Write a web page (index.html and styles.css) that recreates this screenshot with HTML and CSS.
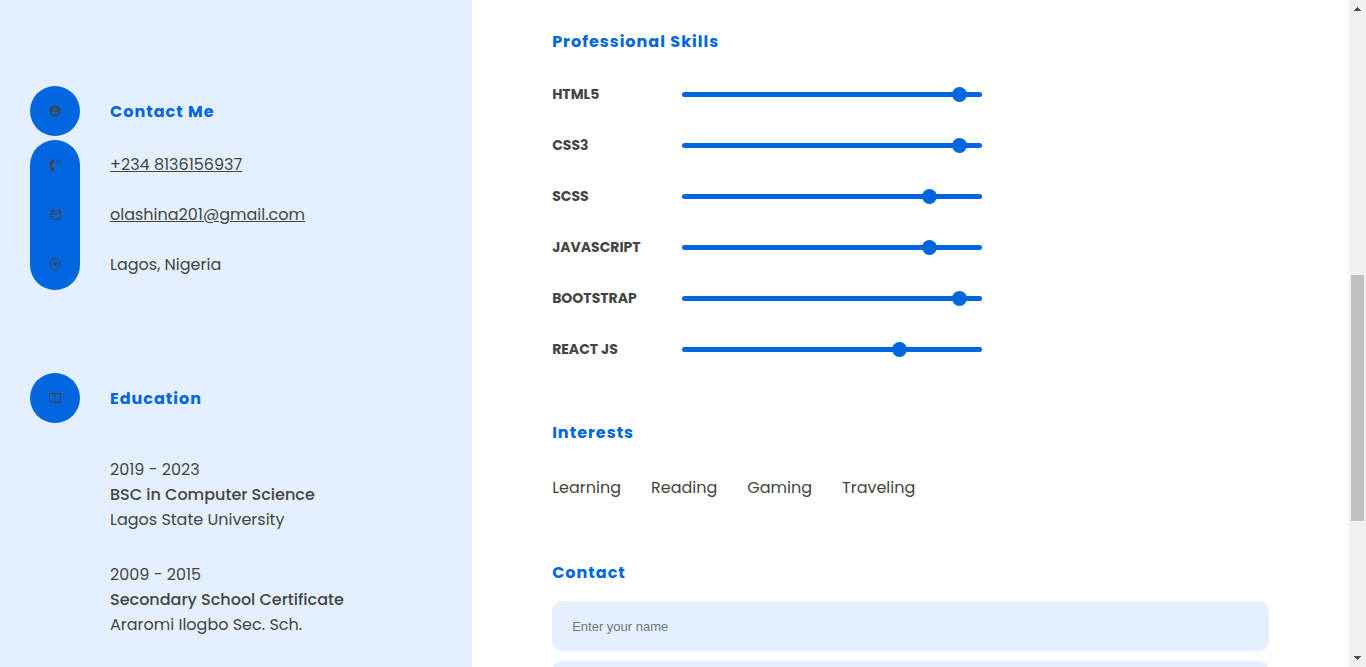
FILE: index.html
```html
<!DOCTYPE html>
<html lang="en">
<head>
<meta charset="utf-8">
<title>Resume</title>
<link rel="stylesheet" href="styles.css">
</head>
<body>
<div class="page">
  <aside class="sidebar">
    <section class="contact-me">
      <div class="side-head">
        <span class="badge"><svg class="icon" viewBox="0 0 24 24"><path fill-rule="evenodd" d="M12 1a11 11 0 1 0 0 22 11 11 0 0 0 0-22zm0 3.500a4 4 0 1 1 0 8 4 4 0 0 1 0-8zM5 15c2-1.500 4-1.500 7-1.500s5 0 7 1.500c-1 3-4 4.800-7 4.800S6 18 5 15z"/></svg></span>
        <h2 class="title">Contact Me</h2>
      </div>
      <div class="contact-body">
        <div class="rail">
          <span class="rail-item"><svg class="icon icon-tall" viewBox="0 0 24 28"><path d="M9 3 4.500 5C0 11 .5 20 5 26.500l5 .5 2-5-3-3-2 .6c-1.300-3-1.300-7 0-10l2.500.4 2-4z"/><path class="line thin" d="M14 6c1.300 2 1.300 4 0 6M17.500 3c2.500 4 2.500 8 0 12M21 3c2.500 4 2.500 8 0 12"/></svg></span>
          <span class="rail-item"><svg class="icon" viewBox="0 0 24 24"><path class="line" d="M5 10V3h18v17h-9M5 4l9 7 9-7M0 11h8M2 15h7M6 20h5"/></svg></span>
          <span class="rail-item"><svg class="icon icon-tall" viewBox="0 0 24 28"><path class="line" d="M12 27C7 21 2 16.500 2 11a10 10 0 0 1 20 0c0 5.500-5 10-10 16z"/><circle cx="12" cy="11" r="4"/></svg></span>
        </div>
        <ul class="contact-list">
          <li><a href="tel:+2348136156937">+234 8136156937</a></li>
          <li><a href="mailto:olashina201@gmail.com">olashina201@gmail.com</a></li>
          <li>Lagos, Nigeria</li>
        </ul>
      </div>
    </section>
    <section class="education">
      <div class="side-head">
        <span class="badge"><svg class="icon" viewBox="0 0 24 24"><path class="line" d="M1 3h22v17h-9L12 22l-2-2H1zM12 3v20"/></svg></span>
        <h2 class="title">Education</h2>
      </div>
      <div class="schools">
        <div class="school"><p>2019 - 2023</p><h3>BSC in Computer Science</h3><p>Lagos State University</p></div>
        <div class="school"><p>2009 - 2015</p><h3>Secondary School Certificate</h3><p>Araromi Ilogbo Sec. Sch.</p></div>
      </div>
    </section>
  </aside>
  <main class="main">
    <section>
      <h2 class="title">Professional Skills</h2>
      <div class="skills">
        <div class="skill"><label for="s1">HTML5</label><input id="s1" type="range" max="285" value="270"></div>
        <div class="skill"><label for="s2">CSS3</label><input id="s2" type="range" max="285" value="270"></div>
        <div class="skill"><label for="s3">SCSS</label><input id="s3" type="range" max="285" value="240"></div>
        <div class="skill"><label for="s4">JAVASCRIPT</label><input id="s4" type="range" max="285" value="240"></div>
        <div class="skill"><label for="s5">BOOTSTRAP</label><input id="s5" type="range" max="285" value="270"></div>
        <div class="skill"><label for="s6">REACT JS</label><input id="s6" type="range" max="285" value="210"></div>
      </div>
    </section>
    <section>
      <h2 class="title">Interests</h2>
      <ul class="interests"><li>Learning</li><li>Reading</li><li>Gaming</li><li>Traveling</li></ul>
    </section>
    <section>
      <h2 class="title">Contact</h2>
      <form class="form">
        <input class="field" type="text" aria-label="Name" placeholder="Enter your name">
        <input class="field" type="email" aria-label="Email">
      </form>
    </section>
  </main>
  <div class="scrollbar" aria-hidden="true">
    <svg class="arrow" viewBox="0 0 17 17"><path d="M8 7h1v1h1v1h1v1h1v1H5v-1h1V9h1V8h1z"/></svg>
    <span class="before"></span><span class="thumb"></span><span class="after"></span>
    <svg class="arrow" viewBox="0 0 17 17"><path d="M5 6h7v1h-1v1h-1v1H9v1H8V9H7V8H6V7H5z"/></svg>
  </div>
</div>
</body>
</html>
```
FILE: styles.css
```css
* { box-sizing: border-box; margin: 0; padding: 0; }
body {
  font-family: Poppins, Inter, "Open Sans", sans-serif;
  font-size: 16px;
  line-height: 25px;
  color: #444;
  background: #fff;
}
ul { list-style: none; }
.page {
  display: grid;
  grid-template-columns: 35fr 65fr 17px;
  grid-template-rows: minmax(0, 1fr);
  height: 100vh;
  overflow: hidden;
}
.title {
  font-size: 16px;
  font-weight: 700;
  letter-spacing: 1px;
  color: #0066df;
}

.sidebar {
  display: flex;
  flex-direction: column;
  gap: 83px;
  padding: 86px 30px 30px;
  background: #e4f0ff;
}
.side-head { display: flex; align-items: center; gap: 30px; }
.badge {
  display: grid;
  place-items: center;
  width: 50px;
  height: 50px;
  border-radius: 50%;
  background: #0066df;
}
.icon { display: block; width: 12px; height: 12px; fill: #444; }
.icon-tall { height: 14px; }
.line { fill: none; stroke: #444; stroke-width: 2; }
.thin { stroke-width: 1; }
.contact-body { display: flex; gap: 30px; margin-top: 4px; }
.rail { width: 50px; border-radius: 25px; background: #0066df; }
.rail-item { display: grid; place-items: center; height: 50px; }
.contact-list { line-height: 50px; }
.contact-list a { color: inherit; text-decoration: underline; }
.schools {
  display: flex;
  flex-direction: column;
  gap: 30px;
  margin: 34px 0 0 80px;
}
.school h3 { font-size: 16px; font-weight: 500; }

.main {
  display: flex;
  flex-direction: column;
  gap: 60px;
  padding: 29px 80px;
}
.skills { display: flex; flex-direction: column; gap: 30px; margin-top: 30px; }
.skill {
  display: grid;
  grid-template-columns: 130px 300px;
  align-items: center;
  line-height: 21px;
}
.skill label { font-size: 14px; font-weight: 700; }
.skill input {
  appearance: none;
  width: 100%;
  height: 5px;
  border-radius: 3px;
  background: #0066df;
}
.skill input::-webkit-slider-thumb {
  appearance: none;
  width: 15px;
  height: 15px;
  border-radius: 50%;
  background: #0066df;
}
.interests { display: flex; gap: 30px; margin-top: 30px; }
.form { display: flex; flex-direction: column; gap: 10px; margin-top: 16px; }
.field {
  width: 100%;
  height: 50px;
  padding: 0 20px;
  border: 0;
  border-radius: 10px;
  background: #e4f0ff;
  font: 13px "Liberation Sans", Arial, sans-serif;
}
.field::placeholder { color: #757575; }

.scrollbar { display: flex; flex-direction: column; background: #f1f1f1; }
.arrow { flex: none; width: 17px; height: 17px; fill: #505050; shape-rendering: crispEdges; }
.before { flex: 258; }
.thumb { flex: 246; margin: 0 2px; background: #c1c1c1; }
.after { flex: 129; }
```
